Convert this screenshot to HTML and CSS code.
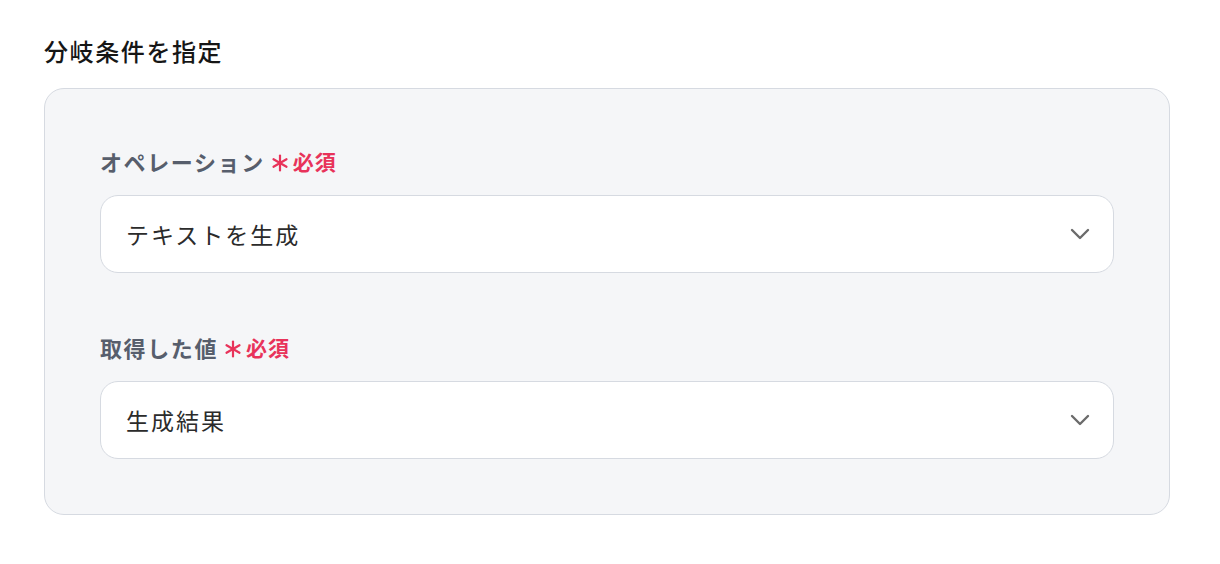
FILE: index.html
```html
<!DOCTYPE html>
<html lang="ja">
<head>
<meta charset="utf-8">
<link rel="stylesheet" href="styles.css">
</head>
<body>
<div class="page">
  <h2 class="title">分岐条件を指定</h2>
  <div class="panel">
    <div class="field">
      <div class="label">オペレーション<span class="req"><svg class="ast" width="18" height="18" viewBox="0 0 18 18"><g stroke="#e8335a" stroke-width="2.2" stroke-linecap="round"><path d="M9 1.5 V16.5"/><path d="M2.5 5.25 L15.5 12.75"/><path d="M2.5 12.75 L15.5 5.25"/></g></svg>必須</span></div>
      <div class="select">
        <span class="value">テキストを生成</span>
        <svg class="chev" width="20" height="12" viewBox="0 0 20 12"><path d="M2 2 L10 10 L18 2" fill="none" stroke="#6b6b6b" stroke-width="2.4" stroke-linecap="round" stroke-linejoin="round"/></svg>
      </div>
    </div>
    <div class="field">
      <div class="label">取得した値<span class="req"><svg class="ast" width="18" height="18" viewBox="0 0 18 18"><g stroke="#e8335a" stroke-width="2.2" stroke-linecap="round"><path d="M9 1.5 V16.5"/><path d="M2.5 5.25 L15.5 12.75"/><path d="M2.5 12.75 L15.5 5.25"/></g></svg>必須</span></div>
      <div class="select">
        <span class="value">生成結果</span>
        <svg class="chev" width="20" height="12" viewBox="0 0 20 12"><path d="M2 2 L10 10 L18 2" fill="none" stroke="#6b6b6b" stroke-width="2.4" stroke-linecap="round" stroke-linejoin="round"/></svg>
      </div>
    </div>
  </div>
</div>
</body>
</html>
```
FILE: styles.css
```css
* { box-sizing: border-box; }
body {
  margin: 0;
  background: #ffffff;
  font-family: "Noto Sans CJK JP", "Noto Sans", sans-serif;
}
.page {
  padding: 34px 50px 0 44px;
  width: 1220px;
}
.title {
  margin: 0 0 21px;
  font-size: 24px;
  line-height: 33px;
  font-weight: 500;
  color: #161616;
  letter-spacing: 1.6px;
}
.panel {
  width: 1126px;
  border: 1px solid #d6dae1;
  border-radius: 20px;
  background: #f5f6f8;
  padding: 56px 55px 55px;
  display: flex;
  flex-direction: column;
  gap: 58px;
}
.label {
  display: flex;
  align-items: center;
  font-size: 22px;
  line-height: 32px;
  font-weight: 700;
  color: #575e6c;
  letter-spacing: 1.6px;
  margin-bottom: 18px;
}
.req {
  display: inline-flex;
  align-items: center;
  color: #e8335a;
  font-size: 21px;
  font-weight: 700;
  letter-spacing: 1px;
  margin-left: 6px;
}
.ast {
  display: block;
  margin: 4px 4px 0 0;
}
.select {
  height: 78px;
  background: #ffffff;
  border: 1px solid #d6dae1;
  border-radius: 18px;
  display: flex;
  align-items: center;
  justify-content: space-between;
  padding: 0 23px 0 25px;
}
.value {
  font-size: 23px;
  color: #2b2b2b;
  letter-spacing: 2px;
}
.chev { display: block; }
```
